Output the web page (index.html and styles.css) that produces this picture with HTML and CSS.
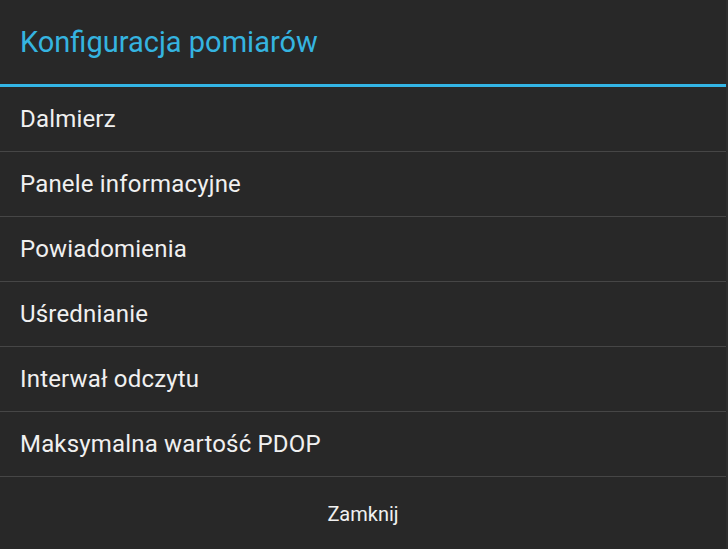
FILE: index.html
```html
<!DOCTYPE html>
<html lang="pl">
<head>
<meta charset="utf-8">
<title>Konfiguracja pomiarów</title>
<link rel="stylesheet" href="styles.css">
</head>
<body>
<div class="dialog">
  <header class="dialog-header">
    <h1 class="dialog-title">Konfiguracja pomiarów</h1>
  </header>
  <ul class="menu">
    <li class="menu-item">Dalmierz</li>
    <li class="menu-item">Panele informacyjne</li>
    <li class="menu-item">Powiadomienia</li>
    <li class="menu-item">Uśrednianie</li>
    <li class="menu-item">Interwał odczytu</li>
    <li class="menu-item">Maksymalna wartość PDOP</li>
  </ul>
  <div class="dialog-actions">
    <button class="action-button" type="button">Zamknij</button>
  </div>
</div>
</body>
</html>
```
FILE: styles.css
```css
html, body {
  margin: 0;
  padding: 0;
  background: #282828;
  height: 100%;
}
body {
  font-family: Roboto, "Noto Sans", sans-serif;
  color: #f0f0f0;
}
.dialog {
  display: flex;
  flex-direction: column;
  height: 549px;
  border-right: 2px solid #2e2e2e;
  box-sizing: border-box;
}
.dialog-header {
  height: 84px;
  display: flex;
  align-items: center;
  padding-left: 20px;
  border-bottom: 3px solid #33b5e5;
}
.dialog-title {
  margin: 0;
  font-size: 29px;
  font-weight: 400;
  color: #35b4e0;
}
.menu {
  list-style: none;
  margin: 0;
  padding: 0;
}
.menu-item {
  height: 64px;
  display: flex;
  align-items: center;
  padding-left: 20px;
  font-size: 24px;
  letter-spacing: 0.18px;
  border-bottom: 1px solid #464646;
}
.dialog-actions {
  flex: 1;
  display: flex;
}
.action-button {
  flex: 1;
  background: transparent;
  border: 0;
  color: #f0f0f0;
  font-family: Roboto, "Noto Sans", sans-serif;
  font-size: 20px;
  padding: 2px 0 0 0;
}
```
